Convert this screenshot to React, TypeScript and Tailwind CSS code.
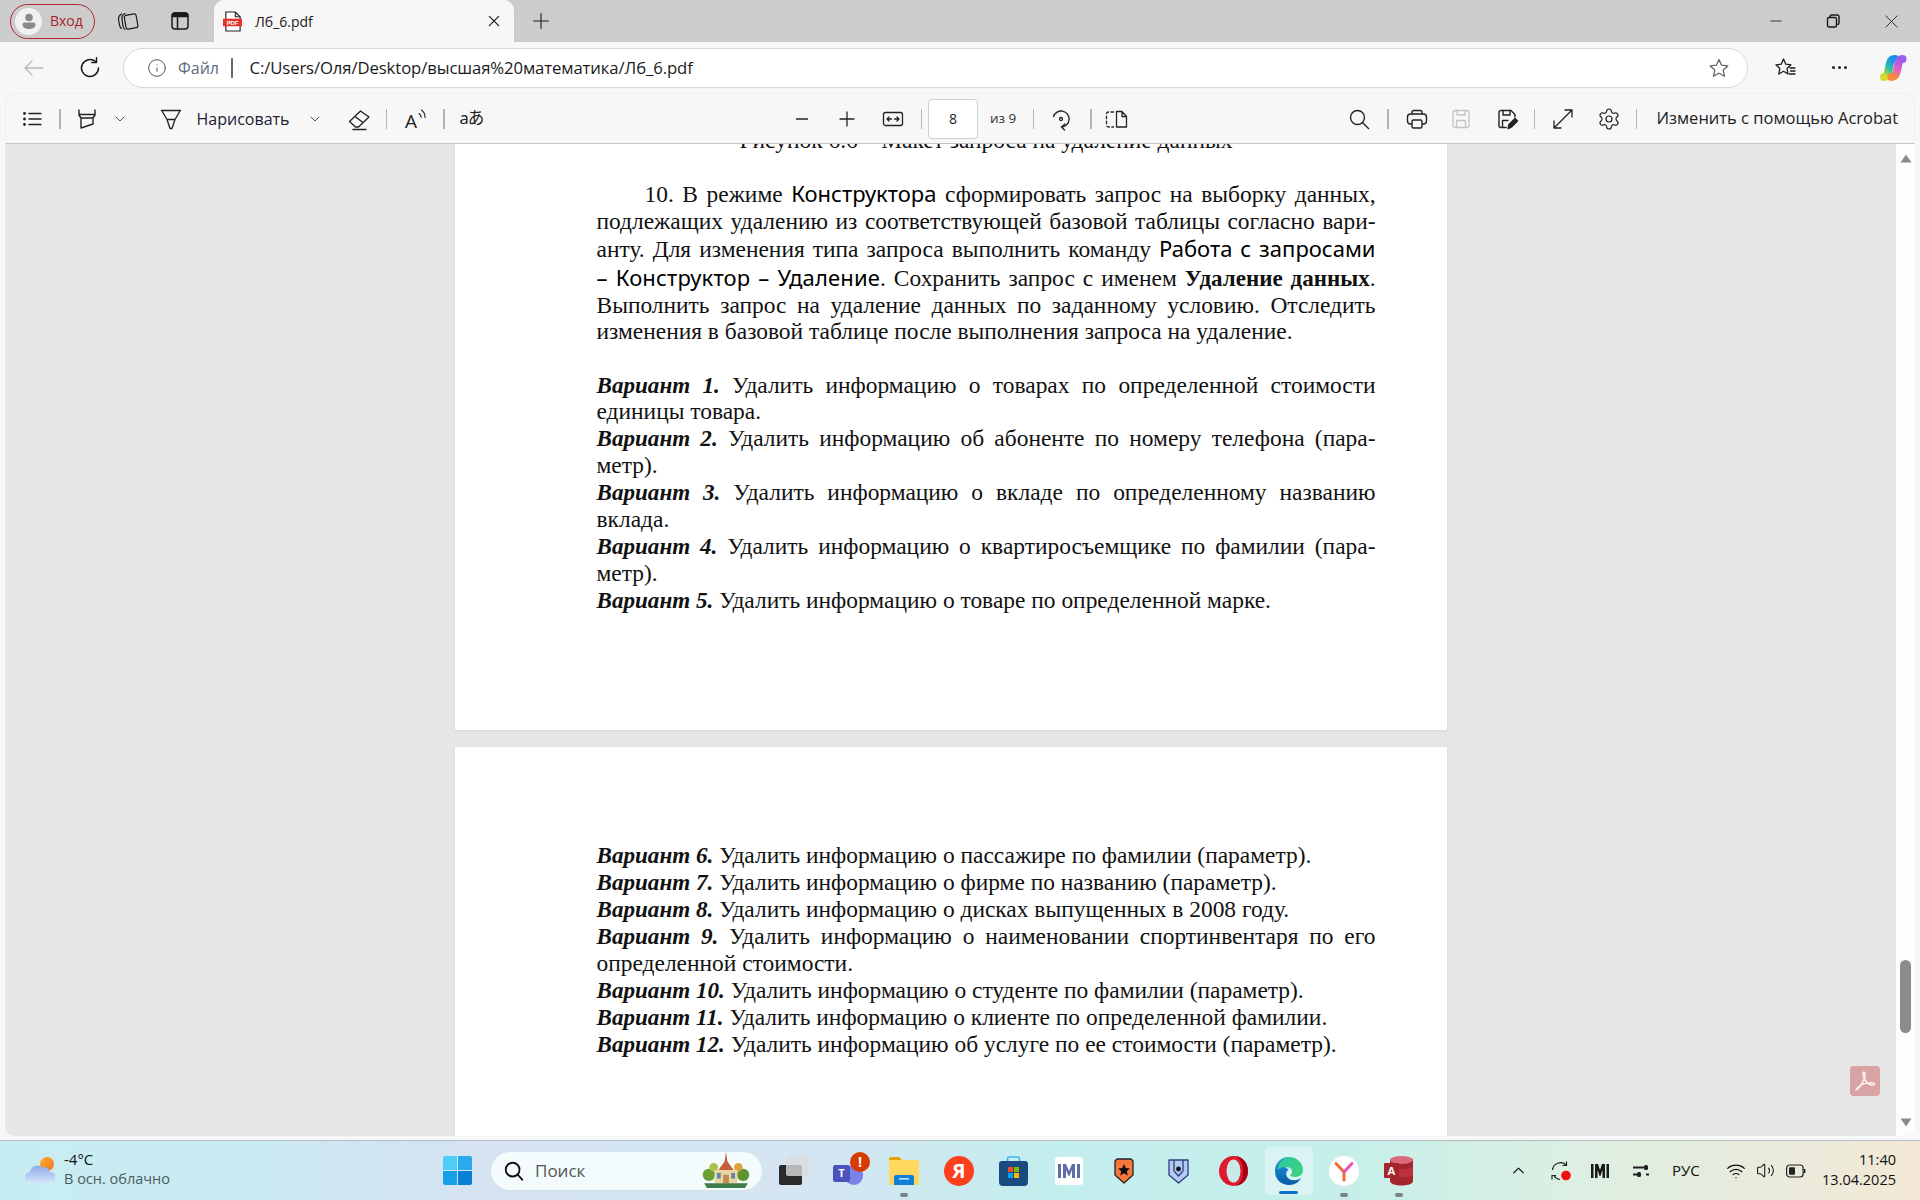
import React from "react";
import { Settings, Wifi, Volume2, ChevronUp, Info } from "lucide-react";

type P = { className?: string; children?: React.ReactNode; vb?: string; sw?: number };
const Ic = ({ className = "", children, vb = "0 0 24 24", sw = 1.4 }: P) => (
  <svg viewBox={vb} className={(className.includes("w-[") ? className : className + " w-[24px] h-[24px]") + " shrink-0"} fill="none" stroke="currentColor" strokeWidth={sw} strokeLinecap="round" strokeLinejoin="round">
    {children}
  </svg>
);
const Sep = ({ className = "" }: { className?: string }) => <div className={"w-[1.5px] h-[20px] bg-[#b4b4b4] shrink-0 " + className} />;

const TabStrip = () => (
  <div className="h-[42px] bg-[#cccccc] flex items-center text-[#1a1a1a] relative">
    <div className="ml-[10px] w-[85px] h-[35px] rounded-full border-[1.5px] border-[#b3262e] flex items-center pl-[4px] shrink-0">
      <div className="w-[27px] h-[27px] rounded-full bg-[#f1f1f1] flex items-center justify-center">
        <svg viewBox="0 0 20 20" className="w-[20px] h-[20px]" fill="#8a8a8a"><circle cx="10" cy="6.5" r="3.8" /><path d="M3.5 13.5 a2 2 0 0 1 2-2 h9 a2 2 0 0 1 2 2 c0 3 -3 4.5 -6.5 4.5 s-6.5-1.5-6.5-4.5z" /></svg>
      </div>
      <span className="ml-[8px] text-[14px] text-[#a4262c] leading-none">Вход</span>
    </div>
    <Ic className="ml-[21px] w-[24px] h-[24px]" sw={1.2}>
      <rect x="9" y="5.5" width="12" height="14" rx="2" transform="rotate(-10 15 12)" />
      <path d="M9 4.5 C6.5 5.5 5.5 7 6 10 L7 17 C7.3 19 8 20 9 20.5" />
      <path d="M5.5 5 C3 6.5 2.2 8.5 2.6 11 L3.6 16.5 C4 18 4.5 19 5.5 19.5" />
    </Ic>
    <Ic className="ml-[28px] w-[24px] h-[24px]" sw={1.5}>
      <rect x="4" y="4" width="16" height="16" rx="3" />
      <path d="M4.5 7.5 h15 v-1.5 a2 2 0 0 0 -2 -2 h-11 a2 2 0 0 0 -2 2z" fill="currentColor" />
      <path d="M9.5 8 V20" />
    </Ic>
    <div className="ml-[22px] w-[300px] h-[42px] bg-[#f7f7f7] rounded-t-[10px] flex items-center shrink-0 self-end">
      <svg viewBox="0 0 20 22" className="ml-[9px] w-[19px] h-[21px] shrink-0">
        <path d="M3 1 h10 l5 5 v15 h-15z" fill="#fff" stroke="#222" strokeWidth="1.2" />
        <path d="M13 1 v5 h5" fill="none" stroke="#222" strokeWidth="1.2" />
        <rect x="0" y="8" width="20" height="8" fill="#e5322d" />
        <text x="10" y="14.4" textAnchor="middle" fontSize="6.2" fontWeight="700" fill="#fff" fontFamily="Liberation Sans">PDF</text>
      </svg>
      <span className="ml-[13px] text-[14px] w-[231px]">Лб_6.pdf</span>
      <Ic className="w-[16px] h-[16px]" sw={1.8}><path d="M5 5 L19 19 M19 5 L5 19" /></Ic>
    </div>
    <Ic className="ml-[17px] w-[20px] h-[20px]" sw={1.3}><path d="M12 3 V21 M3 12 H21" /></Ic>
    <div className="ml-auto flex items-center">
      <Ic className="w-[14px] h-[14px]" sw={1.4}><path d="M3 12 H21" /></Ic>
      <Ic className="ml-[43px] w-[14px] h-[14px]" sw={1.4} vb="0 0 14 14">
        <rect x="1.5" y="3.5" width="9" height="9.5" rx="1.5" /><path d="M4 3.5 V2.5 a1.5 1.5 0 0 1 1.5-1.5 H11 a2 2 0 0 1 2 2 V9 a1.5 1.5 0 0 1-2.5 1" />
      </Ic>
      <Ic className="ml-[44px] mr-[21px] w-[15px] h-[15px]" sw={1.4}><path d="M3 3 L21 21 M21 3 L3 21" /></Ic>
    </div>
  </div>
);

const NavRow = () => (
  <div className="h-[51px] flex items-center text-[#1a1a1a]">
    <Ic className="ml-[22px] w-[24px] h-[24px] text-[#b9b9b9]"><path d="M21 12 H3 M10 5 L3 12 L10 19" /></Ic>
    <Ic className="ml-[32px] w-[24px] h-[24px]" sw={1.5}><path d="M20.5 12 A8.5 8.5 0 1 1 17.5 5.5" /><path d="M18.5 1.8 V6.5 H13.8" /></Ic>
    <div className="ml-[21px] w-[1625px] h-[40px] bg-white rounded-full border-[1.5px] border-[#d8d8d8] flex items-center shrink-0">
      <Info className="ml-[23px] w-[20px] h-[20px] text-[#555]" strokeWidth={1.2} />
      <span className="ml-[11px] w-[38px] text-[16px] text-[#5d6b7b] whitespace-nowrap">Файл</span>
      <div className="ml-[15px] w-[1.5px] h-[20px] bg-[#666]" />
      <span className="ml-[17px] text-[16.7px] tracking-[-0.1px]">C:/Users/Оля/Desktop/высшая%20математика/Лб_6.pdf</span>
      <svg viewBox="0 0 24 24" className="ml-auto mr-[16px] w-[24px] h-[24px]" fill="none" stroke="#666" strokeWidth="1.3" strokeLinejoin="round"><path d="M12 3.5 L14.6 9.2 L20.8 9.9 L16.2 14.1 L17.5 20.3 L12 17.2 L6.5 20.3 L7.8 14.1 L3.2 9.9 L9.4 9.2 Z" /></svg>
    </div>
    <Ic className="ml-[25px] w-[24px] h-[24px]" sw={1.3}><path d="M10.5 3 L12.8 8.2 L18 8.8 L14 12.5 L15 18 L10.5 15.3 L5.8 18 L6.8 12.5 L3 8.8 L8.2 8.2 Z" /><path d="M17 12 H22 M17.5 15 H22 M16.5 18 H22" /></Ic>
    <div className="ml-[35px] flex gap-[3px]"><span className="w-[3px] h-[3px] rounded-full bg-[#222]" /><span className="w-[3px] h-[3px] rounded-full bg-[#222]" /><span className="w-[3px] h-[3px] rounded-full bg-[#222]" /></div>
    <svg viewBox="0 0 28 28" className="ml-[32px] w-[28px] h-[28px] shrink-0" fill="none" strokeLinecap="round">
      <defs>
        <linearGradient id="cpA" x1="0.8" y1="0" x2="0.2" y2="1"><stop offset="0" stopColor="#1a8ff0" /><stop offset="0.55" stopColor="#27c3a0" /><stop offset="1" stopColor="#d8d82c" /></linearGradient>
        <linearGradient id="cpB" x1="0.7" y1="0" x2="0.3" y2="1"><stop offset="0" stopColor="#9a5cf0" /><stop offset="0.55" stopColor="#e45fc0" /><stop offset="1" stopColor="#f58a3c" /></linearGradient>
      </defs>
      <path d="M16 5 C11 5 11 9 10 14 C9 19 8.5 23 5 23" stroke="url(#cpA)" strokeWidth="8" />
      <path d="M12.5 23 C17 23 17.5 19 18.5 14 C19.5 9 20 5 23.5 5" stroke="url(#cpB)" strokeWidth="8" />
    </svg>
  </div>
);

const PdfBar = () => (
  <div className="mx-[5px] h-[51px] bg-[#f7f7f7] rounded-t-[8px] border-t border-x border-[#efefef] border-b-[#c4c4c4] border-b flex items-center text-[#222] shrink-0">
    <Ic className="ml-[14px]" sw={1.4}><path d="M9 6.5 H21 M9 12 H21 M9 17.5 H21" /><circle cx="4.5" cy="6.5" r="0.7" fill="currentColor" /><circle cx="4.5" cy="12" r="0.7" fill="currentColor" /><circle cx="4.5" cy="17.5" r="0.7" fill="currentColor" /></Ic>
    <Sep className="ml-[15px]" />
    <Ic className="ml-[14px]"><path d="M4 3 V8 L6 11 H18 L20 8 V3 M4 7.5 H20 M6 11 V21 L18 17 V11" /></Ic>
    <Ic className="ml-[15px] w-[12px] h-[12px] text-[#555]" vb="0 0 12 12" sw={1}><path d="M2 4 L6 8 L10 4" /></Ic>
    <Ic className="ml-[33px]" sw={1.3}><path d="M2.5 3.5 H21.5 M3 4 L8 12.5 H16 L21 4 M8 12.5 L11 21.5 H13 L16 12.5" /></Ic>
    <span className="ml-[14px] w-[94px] text-[16px] text-[#223] whitespace-nowrap">Нарисовать</span>
    <Ic className="ml-[18px] w-[12px] h-[12px] text-[#555]" vb="0 0 12 12" sw={1}><path d="M2 4 L6 8 L10 4" /></Ic>
    <Ic className="ml-[26px]" sw={1.3}><path d="M2.5 14.5 L13.5 4 L22 10 L11.5 20 H8.5 Z M8 9.5 L16 15.5 M6 22.5 H19" /></Ic>
    <Sep className="ml-[15px] w-[1px]" />
    <svg viewBox="0 0 24 24" className="ml-[16px] w-[24px] h-[24px] shrink-0" fill="none" stroke="#222" strokeWidth="1.1" strokeLinecap="round">
      <text x="2" y="20.5" fontSize="19" fill="#222" stroke="none" fontFamily="Open Sans, sans-serif">A</text>
      <path d="M16 6.5 a5 5 0 0 1 2.2 3.8 M18.5 3 a9 9 0 0 1 3.5 7.5" />
    </svg>
    <Sep className="ml-[16px] w-[2px]" />
    <span className="ml-[15px] w-[24px] text-[16.5px] leading-none tracking-[-1px] whitespace-nowrap font-['Noto_Sans','Noto_Sans_CJK_JP',sans-serif]">aあ</span>

    <Ic className="ml-[306px]" sw={1.3}><path d="M6.5 12 H17.5" /></Ic>
    <Ic className="ml-[21px]" sw={1.3}><path d="M12 5 V19 M5 12 H19" /></Ic>
    <Ic className="ml-[22px]" sw={1.3}><rect x="2.5" y="5.5" width="19" height="13" rx="2" /><path d="M6 12 H10.5 M6 12 L8 10 M6 12 L8 14 M18 12 H13.5 M18 12 L16 10 M18 12 L16 14" /></Ic>
    <Sep className="ml-[16px]" />
    <div className="ml-[6px] w-[50px] h-[40px] bg-white border border-[#cfcfcf] rounded-[4px] flex items-center justify-center text-[14px] text-[#223]">8</div>
    <span className="ml-[12px] w-[28px] text-[13.5px] whitespace-nowrap text-[#333]">из 9</span>
    <Sep className="ml-[15px] w-[1px]" />
    <Ic className="ml-[15px]" sw={1.3}><path d="M4.5 9.5 A8 8 0 1 1 12.5 20" /><path d="M16 17 L12.5 20 L15.5 23" /><circle cx="12" cy="12" r="1.5" /></Ic>
    <Sep className="ml-[17px] w-[2px]" />
    <Ic className="ml-[12px]" sw={1.3}><path d="M9.5 5 H4.5 a2 2 0 0 0 -2 2 V18 a2 2 0 0 0 2 2 H9.5" strokeDasharray="2.5 2.5" /><path d="M12.5 4.5 H18 L22.5 9.5 V20 H12.5 Z M18 4.5 V9.5 H22.5" /></Ic>

    <Ic className="ml-[219px]" sw={1.4}><circle cx="10.5" cy="10.5" r="7" /><path d="M15.5 15.5 L21.5 21.5" /></Ic>
    <Sep className="ml-[16px]" />
    <Ic className="ml-[16px]" sw={1.4}><path d="M7 7 V5.5 a2 2 0 0 1 2-2 H15 a2 2 0 0 1 2 2 V7" /><rect x="2.5" y="7" width="19" height="10" rx="3" /><rect x="7" y="13" width="10" height="8" rx="1.5" fill="#f7f7f7" /></Ic>
    <Ic className="ml-[20px] text-[#c4c4c4]" sw={1.3}><rect x="4" y="3.5" width="16" height="17" rx="2.5" /><path d="M8 3.5 V8 H16 V3.5 M7.5 20.5 V13.5 H16.5 V20.5" /></Ic>
    <svg viewBox="0 0 24 24" className="ml-[22px] w-[24px] h-[24px] shrink-0" fill="none" stroke="#222" strokeWidth="1.4" strokeLinecap="round" strokeLinejoin="round">
      <path d="M11 20.5 H6 a2 2 0 0 1 -2 -2 V5.5 a2 2 0 0 1 2 -2 H16 L20 7.5 V10" /><path d="M8 3.5 V8 H15 V3.5 M7.5 20 V13.5 H13" />
      <path d="M13 21.5 L14 17.5 L20 11.5 L22.5 14 L16.5 20 Z" fill="#222" />
    </svg>
    <Sep className="ml-[15px] w-[1px]" />
    <Ic className="ml-[16px]" sw={1.3}><path d="M3 21 L21 3 M14 3 H21 V10 M3 14 V21 H10" /></Ic>
    <Settings className="ml-[22px] w-[24px] h-[24px] shrink-0" strokeWidth={1.2} />
    <Sep className="ml-[15px] w-[1px]" />
    <span className="ml-[20px] text-[16.5px] whitespace-nowrap text-[#222]">Изменить с помощью Acrobat</span>
  </div>
);

const V = ({ n }: { n: string }) => <b className="italic font-bold text-[23.1px]">Вариант {n}.</b>;
const S = ({ children }: { children: React.ReactNode }) => <span className="font-['Noto_Sans',sans-serif] text-[22px] text-black">{children}</span>;
const L = ({ j, children, h = "h-[26.9px] leading-[26.9px]" }: { j?: boolean; children?: React.ReactNode; h?: string }) => (
  <p className={j ? h + " text-justify [text-align-last:justify]" : h + " whitespace-nowrap"}>{children}</p>
);

const Viewer = () => (
  <div className="mx-[5px] h-[992px] flex rounded-b-[10px] overflow-hidden shrink-0">
    <div className="flex-1 bg-[#e6e6e6] flex flex-col items-center overflow-hidden">
      <div className="-mt-[17.5px] w-[992px] h-[603.5px] bg-white pl-[142px] pr-[71px] shrink-0 font-['Liberation_Serif',serif] text-[23.45px] text-[#111] shadow-[0_1px_3px_rgba(0,0,0,0.08)]">
        <p className="h-[53.5px] leading-[27px] text-center">Рисунок 6.6 – Макет запроса на удаление данных</p>
        <L j h="h-[27.5px] leading-[27px] pl-[48px]">10. В режиме <S>Конструктора</S> сформировать запрос на выборку данных,</L>
        <L j h="h-[27px] leading-[27px]">подлежащих удалению из соответствующей базовой таблицы согласно вари-</L>
        <L j h="h-[28px] leading-[27px]">анту. Для изменения типа запроса выполнить команду <S>Работа с запросами</S></L>
        <L j h="h-[29px] leading-[29px]"><span className="font-['Noto_Sans',sans-serif] text-[22px] tracking-[0.15px] text-black">– Конструктор – Удаление</span>. Сохранить запрос с именем <b className="text-[23px]">Удаление данных</b>.</L>
        <L j h="h-[26px] leading-[26px]">Выполнить запрос на удаление данных по заданному условию. Отследить</L>
        <L h="h-[54px] leading-[27px]">изменения в базовой таблице после выполнения запроса на удаление.</L>
        <L j><V n="1" /> Удалить информацию о товарах по определенной стоимости</L>
        <L>единицы товара.</L>
        <L j><V n="2" /> Удалить информацию об абоненте по номеру телефона (пара-</L>
        <L>метр).</L>
        <L j><V n="3" /> Удалить информацию о вкладе по определенному названию</L>
        <L>вклада.</L>
        <L j><V n="4" /> Удалить информацию о квартиросъемщике по фамилии (пара-</L>
        <L>метр).</L>
        <L><V n="5" /> Удалить информацию о товаре по определенной марке.</L>
      </div>
      <div className="mt-[17px] w-[992px] flex-1 bg-white pt-[95.3px] pl-[142px] pr-[71px] font-['Liberation_Serif',serif] text-[23.45px] text-[#111] shadow-[0_1px_3px_rgba(0,0,0,0.08)]">
        <L><V n="6" /> Удалить информацию о пассажире по фамилии (параметр).</L>
        <L><V n="7" /> Удалить информацию о фирме по названию (параметр).</L>
        <L><V n="8" /> Удалить информацию о дисках выпущенных в 2008 году.</L>
        <L j><V n="9" /> Удалить информацию о наименовании спортинвентаря по его</L>
        <L>определенной стоимости.</L>
        <L><V n="10" /> Удалить информацию о студенте по фамилии (параметр).</L>
        <L><V n="11" /> Удалить информацию о клиенте по определенной фамилии.</L>
        <L><V n="12" /> Удалить информацию об услуге по ее стоимости (параметр).</L>
      </div>
    </div>
    <div className="w-[19px] bg-[#fdfdfd] flex flex-col items-center relative shrink-0">
      <svg viewBox="0 0 12 9" className="mt-[10px] w-[12px] h-[9px]"><path d="M6 0.5 L11.5 8.5 H0.5 Z" fill="#8a8a8a" strokeLinejoin="round" /></svg>
      <div className="mt-[797px] w-[11px] h-[73px] rounded-full bg-[#8c8c8c]" />
      <svg viewBox="0 0 12 9" className="mt-auto mb-[9px] w-[12px] h-[9px]"><path d="M6 8.5 L11.5 0.5 H0.5 Z" fill="#8a8a8a" /></svg>
    </div>
    <div className="absolute left-[1850px] top-[1066px] w-[30px] h-[30px] rounded-[4px] bg-[#d9a3a3] flex items-center justify-center">
      <svg viewBox="0 0 24 24" className="w-[24px] h-[24px]" fill="none" stroke="#fbeeee" strokeWidth="1.6" strokeLinejoin="round">
        <path d="M3 21 C6 20 9 15 11.5 9 C12.5 6 12.5 3 11 3 C9.5 3 10 7 12 11 C14 14.5 17 16 20 16 C22.5 16 22 14 19 13.8 C15 13.5 9 15 5.5 18 C3.5 20 2.5 21.5 3 21 Z" />
      </svg>
    </div>
  </div>
);

const Dot = () => <span className="absolute left-1/2 -translate-x-1/2 top-[52px] w-[8px] h-[4px] rounded-full bg-[#7a8288]" />;

const Taskbar = () => (
  <div className="h-[60px] mt-auto border-t border-[#b3bcc0] flex items-center text-[#111] bg-[linear-gradient(90deg,#c7edf2_0%,#c9ebf1_12%,#d5e3f2_24%,#d5e5f2_42%,#c3eeee_55%,#c6efea_70%,#dcefe2_82%,#f3e8d6_100%)] shrink-0 relative">
    <svg viewBox="0 0 30 28" className="ml-[25px] w-[30px] h-[28px] shrink-0">
      <defs>
        <linearGradient id="sun" x1="0" y1="0" x2="1" y2="1"><stop offset="0" stopColor="#fdb022" /><stop offset="1" stopColor="#f0722a" /></linearGradient>
        <linearGradient id="cld" x1="0" y1="0" x2="0" y2="1"><stop offset="0" stopColor="#8fabe6" /><stop offset="1" stopColor="#d4e2fa" /></linearGradient>
      </defs>
      <circle cx="22" cy="7" r="7" fill="url(#sun)" />
      <path d="M5.5 26 a5.5 5.5 0 0 1 -0.5 -11 a7.5 7.5 0 0 1 12 -5 a6.5 6.5 0 0 1 8 5 a5.5 5.5 0 0 1 0 11z" fill="url(#cld)" />
    </svg>
    <div className="ml-[9px] -mt-[3px] w-[110px] shrink-0 leading-[20px]">
      <div className="text-[15px]">-4°C</div>
      <div className="text-[14.5px] text-[#4b5a60] whitespace-nowrap">В осн. облачно</div>
    </div>
    <div className="ml-[269px] w-[29px] h-[29px] grid grid-cols-2 gap-[1px] shrink-0">
      <span className="rounded-tl-[2px] bg-[#4fcdf9]" /><span className="rounded-tr-[2px] bg-[#2aa9ec]" /><span className="rounded-bl-[2px] bg-[#16a0ea]" /><span className="rounded-br-[2px] bg-[#0a7fd6]" />
    </div>
    <div className="ml-[18px] w-[273px] h-[40px] rounded-full bg-[#f3fbfc] border border-[#d3e2ea] flex items-center shrink-0">
      <Ic className="ml-[12px] w-[22px] h-[22px] text-[#111]" sw={2}><circle cx="10.5" cy="10.5" r="7.5" /><path d="M16 16 L21 21.5" /></Ic>
      <span className="ml-[10px] text-[17px] text-[#555]">Поиск</span>
      <svg viewBox="0 0 52 40" className="ml-auto mr-[10px] w-[52px] h-[38px]">
        <circle cx="8" cy="24" r="6.5" fill="#6e9e36" /><circle cx="44" cy="24" r="6.5" fill="#5f9430" /><circle cx="13" cy="16" r="4.5" fill="#a8c24a" /><circle cx="39" cy="16" r="4.5" fill="#d9a23a" />
        <path d="M26 0 L27.5 10 L34 19 H18 L24.5 10 Z" fill="#c2603c" /><rect x="14" y="19" width="24" height="14" fill="#ead5a2" /><rect x="23" y="24" width="6" height="9" fill="#c08a50" />
        <rect x="16.5" y="22" width="4" height="6" fill="#5f86a8" /><rect x="31.5" y="22" width="4" height="6" fill="#5f86a8" />
        <path d="M3 33 H49 L46 38 H6 Z" fill="#3f7d4a" />
      </svg>
    </div>
    <div className="ml-[16px] w-[29px] h-[29px] relative shrink-0">
      <div className="absolute left-0 bottom-0 w-[23px] h-[20px] rounded-[2px] bg-[#2a2a2a]" />
      <div className="absolute right-0 top-0 w-[22px] h-[20px] rounded-[2px] bg-[#d9dcdf]/80" />
    </div>
    <div className="ml-[25px] w-[37px] h-[38px] relative shrink-0">
      <span className="absolute left-[12px] top-[13px] w-[18px] h-[20px] rounded-full bg-[#7b83eb]" />
      <span className="absolute left-[0px] top-[13px] w-[17px] h-[17px] rounded-[2px] bg-[#4b53bc] text-white text-[11px] font-bold flex items-center justify-center">T</span>
      <span className="absolute right-0 top-0 w-[20px] h-[20px] rounded-full bg-[#d83b01] text-white text-[14px] font-bold flex items-center justify-center">!</span>
    </div>
    <div className="ml-[19px] w-[30px] h-[60px] flex items-center relative shrink-0">
      <svg viewBox="0 0 30 28" className="w-[30px] h-[28px]"><path d="M0 2 a2 2 0 0 1 2 -2 H10 L13 3 H0z" fill="#e3a400" /><rect x="0" y="3" width="30" height="25" rx="1" fill="#ffd75e" /><path d="M5 28 V20 a2 2 0 0 1 2 -2 H23 a2 2 0 0 1 2 2 V28z" fill="#0f7fd6" /><rect x="10" y="21" width="10" height="1.6" fill="#bfe4ff" /></svg>
      <Dot />
    </div>
    <div className="ml-[25px] w-[30px] h-[30px] rounded-full bg-[#fc3f1d] text-white text-[20px] font-bold flex items-center justify-center shrink-0">Я</div>
    <svg viewBox="0 0 29 30" className="ml-[25px] w-[29px] h-[30px] shrink-0">
      <path d="M8.5 6 V3 a2 2 0 0 1 2 -2 h8 a2 2 0 0 1 2 2 V6" fill="none" stroke="#3ab8e8" strokeWidth="1.6" />
      <path d="M0 8 a3 3 0 0 1 3 -3 H26 a3 3 0 0 1 3 3 V26 a4 4 0 0 1 -4 4 H4 a4 4 0 0 1 -4 -4z" fill="#1b4a80" />
      <rect x="9" y="11" width="5" height="5" fill="#f25022" /><rect x="15" y="11" width="5" height="5" fill="#7fba00" /><rect x="9" y="17" width="5" height="5" fill="#00a4ef" /><rect x="15" y="17" width="5" height="5" fill="#ffb900" />
    </svg>
    <div className="ml-[27px] w-[28px] h-[28px] rounded-[3px] bg-white flex items-center justify-center shrink-0">
      <svg viewBox="0 0 22 16" className="w-[22px] h-[16px]" fill="#5c6fa8"><rect x="0" y="1" width="3" height="14" /><path d="M5 1 H8 L11 8 L14 1 H17 V15 H14 V7 L11.5 13 H10.5 L8 7 V15 H5Z" /><rect x="19" y="1" width="3" height="14" /></svg>
    </div>
    <svg viewBox="0 0 20 26" className="ml-[31px] w-[20px] h-[26px] shrink-0"><path d="M3 1 H17 L19 3 V17 L10 25 L1 17 V3Z" fill="#f4793b" stroke="#222" strokeWidth="1.3" strokeLinejoin="round" /><path d="M10 6 L11.8 10 L16 10.4 L12.8 13.2 L13.8 17.4 L10 15.2 L6.2 17.4 L7.2 13.2 L4 10.4 L8.2 10Z" fill="#111" /></svg>
    <svg viewBox="0 0 21 26" className="ml-[34px] w-[21px] h-[26px] shrink-0"><path d="M1 2 H20 V17 L10.5 25 L1 17Z" fill="#b6cbf2" stroke="#2b3f80" strokeWidth="1.3" strokeLinejoin="round" /><path d="M6 2 V13 M15 2 V13 M6 13 L10.5 18 L15 13" fill="none" stroke="#2b3f80" strokeWidth="1.3" /><circle cx="10.5" cy="11" r="2.4" fill="#111" /></svg>
    <svg viewBox="0 0 29 30" className="ml-[30px] w-[29px] h-[30px] shrink-0"><ellipse cx="14.5" cy="15" rx="14.5" ry="15" fill="#e0192d" /><ellipse cx="14.5" cy="15" rx="7" ry="11.5" fill="#c8ebe9" /><path d="M14.5 0 C21 0 24 7 24 15 C24 23 21 30 14.5 30 C23 30 29 24 29 15 C29 6 23 0 14.5 0Z" fill="#a70014" /></svg>
    <div className="ml-[17px] w-[48px] h-[48px] rounded-[5px] bg-[#e3f6f7]/70 flex items-center justify-center relative shrink-0">
      <svg viewBox="0 0 30 30" className="w-[30px] h-[30px]">
        <defs>
          <linearGradient id="edA" x1="0" y1="0" x2="1" y2="1"><stop offset="0" stopColor="#2ec7a0" /><stop offset="1" stopColor="#3fd47e" /></linearGradient>
          <linearGradient id="edB" x1="0" y1="0" x2="0" y2="1"><stop offset="0" stopColor="#1a9be0" /><stop offset="1" stopColor="#0b5aa6" /></linearGradient>
        </defs>
        <path d="M15 1 C6 1 1 8 1 15 C1 24 8 29 15 29 C21 29 25 26 27 22 C23 25 17 25 14 22 C11 19 12 15 15 13.5 C9 11 7 7 15 1Z" fill="url(#edB)" />
        <path d="M15 1 C23 1 29 7 29 14 C29 19 25 21 21 21 C18 21 16 20 16 19 C19 18 19 13 15 11.5 C10 10 5.5 11.5 3.5 14 C4 7 9 1 15 1Z" fill="url(#edA)" />
      </svg>
      <span className="absolute left-[14px] bottom-[1px] w-[19px] h-[3px] rounded-full bg-[#0f72c9]" />
    </div>
    <div className="ml-[16px] w-[30px] h-[60px] flex items-center relative shrink-0">
      <svg viewBox="0 0 30 30" className="w-[30px] h-[30px]">
        <circle cx="15" cy="15" r="15" fill="#fff" />
        <path d="M7 7.5 L15 16 V24" fill="none" stroke="#f36c2e" strokeWidth="3" strokeLinecap="round" /><path d="M23 7.5 L15 16" fill="none" stroke="#ee4fb0" strokeWidth="3" strokeLinecap="round" />
      </svg>
      <Dot />
    </div>
    <div className="ml-[25px] w-[29px] h-[60px] flex items-center relative shrink-0">
      <svg viewBox="0 0 29 30" className="w-[29px] h-[30px]">
        <path d="M6 4 C6 0 29 0 29 4 V25 C29 31 6 31 6 25Z" fill="#a4262c" /><ellipse cx="17.5" cy="4" rx="11.5" ry="4" fill="#dd6a7c" /><path d="M6 11 C10 14 25 14 29 11 V19 C25 22 10 22 6 19Z" fill="#bf3040" />
        <rect x="0" y="7" width="15" height="15" rx="1" fill="#a4262c" /><text x="7.5" y="19" textAnchor="middle" fontSize="11.5" fontWeight="700" fill="#fff" fontFamily="Liberation Sans">A</text>
      </svg>
      <Dot />
    </div>
    <ChevronUp className="ml-[96px] w-[19px] h-[19px] shrink-0 text-[#111]" strokeWidth={1.6} />
    <svg viewBox="0 0 20 20" className="ml-[23px] w-[20px] h-[20px] shrink-0" fill="none" stroke="#222" strokeWidth="1.2">
      <path d="M1.5 9 A8 8 0 0 1 15 4 M15.5 0.5 V4.5 H11.5 M3 14.5 A8 8 0 0 0 9 18.5 M1 18.5 V14.5 H5" /><circle cx="15" cy="14.5" r="4.8" fill="#f40d0d" stroke="none" />
    </svg>
    <svg viewBox="0 0 18 14" className="ml-[20px] w-[18px] h-[14px] shrink-0" fill="#1a1a1a"><rect x="0" y="0" width="2.5" height="14" /><path d="M4 0 H7 L9 6 L11 0 H14 V14 H11.5 V6 L9.5 12 H8.5 L6.5 6 V14 H4Z" /><rect x="15.5" y="0" width="2.5" height="14" /></svg>
    <svg viewBox="0 0 18 16" className="ml-[23px] w-[18px] h-[16px] shrink-0" fill="none" stroke="#222" strokeWidth="1.8"><path d="M1 4.5 H12 M1 11.5 H6 M14 11.5 H17" /><rect x="12" y="2" width="4" height="5" rx="1.5" fill="#222" stroke="none" /><rect x="5" y="9" width="4" height="5" rx="1.5" fill="#222" stroke="none" /></svg>
    <span className="ml-[22px] w-[29px] text-[15px] whitespace-nowrap">РУС</span>
    <Wifi className="ml-[25px] w-[20px] h-[20px] shrink-0" strokeWidth={1.4} />
    <Volume2 className="ml-[10px] w-[19px] h-[19px] shrink-0" strokeWidth={1.3} />
    <svg viewBox="0 0 20 14" className="ml-[11px] w-[20px] h-[14px] shrink-0" fill="none" stroke="#222" strokeWidth="1.2"><rect x="0.6" y="1" width="16.5" height="12" rx="3" /><rect x="3" y="3.2" width="6" height="7.6" rx="1" fill="#222" stroke="none" /><path d="M18.6 5 V9" strokeWidth="1.6" /></svg>
    <div className="flex-1 -mt-[1px] pr-[24px] text-right text-[14.5px] leading-[20px]">
      <div>11:40</div>
      <div>13.04.2025</div>
    </div>
  </div>
);

export default function App() {
  return (
    <div className="w-[1920px] h-[1200px] overflow-hidden flex flex-col bg-[#f7f7f7] font-['Open_Sans',sans-serif] relative">
      <TabStrip />
      <NavRow />
      <PdfBar />
      <Viewer />
      <Taskbar />
    </div>
  );
}
